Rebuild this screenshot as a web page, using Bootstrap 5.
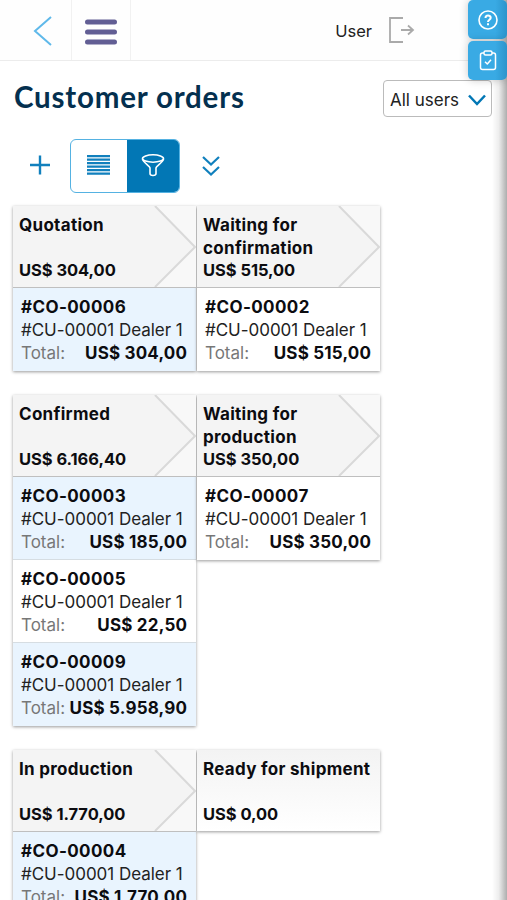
<!DOCTYPE html>
<html lang="en">
<head>
<meta charset="utf-8">
<meta name="viewport" content="width=device-width, initial-scale=1">
<title>Customer orders</title>
<link href="https://cdn.jsdelivr.net/npm/bootstrap@5.3.0/dist/css/bootstrap.min.css" rel="stylesheet">
<style>
html, body { height: 100%; }
body { font-family: Inter, "Liberation Sans", sans-serif; font-size: 17px; line-height: 23px; color: #0c0c10; background: #fff; overflow: hidden; }
svg { display: block; flex: none; }
.page-frame { height: 900px; overflow: hidden; }
.edge-shade { right: 0; top: 0; width: 15px; height: 900px; background: linear-gradient(to right, rgba(0,0,0,0), rgba(0,0,0,.07) 45%, rgba(0,0,0,.32)); }
.topbar { height: 61px; padding-top: 1px; border-bottom: 1px solid #ececec; background: #fefefe; }
.bar-cell { border-right: 1px solid #f1f1f1; margin-top: -1px; padding-top: 2px; }
.cell-back { width: 72px; padding-left: 32px; }
.cell-menu { width: 59px; padding-top: 3px; }
.user-name { font-size: 16.500px; margin-right: 16px; padding-top: 2px; color: #222; }
.user-zone { padding-right: 92px; }
.user-zone svg { margin-top: -2px; }
.help-tabs { right: 0; top: 0; width: 39px; gap: 2px; z-index: 5; }
.help-tab { height: 39px; background: linear-gradient(to right, #39aae4 70%, #2b94cb); border-radius: 5px; box-shadow: 0 0 8px rgba(0,0,0,.22); }
.title-row { padding: 18px 15px 0 14px; height: 77px; }
.page-title { font-family: Lato, sans-serif; font-weight: 700; font-size: 29.500px; line-height: 36px; letter-spacing: .8px; color: #04304f; }
.user-select { width: 109px; height: 37px; margin-top: 1px; border: 1px solid #bbb; border-radius: 4px; padding: 3px 5px 0 6px; color: #222; background: #fff; }
.tools { height: 54px; padding-left: 29px; margin-top: 1px; }
.tool-icon { margin-top: -2px; }
.view-switch { width: 110px; height: 54px; border: 1px solid #55b2e2; border-radius: 6px; overflow: hidden; margin-left: 20px; margin-right: 20px; }
.view-off { width: 56px; padding-right: 2px; }
.view-on { background: #0277b5; padding-right: 1px; }
.board { padding: 13px 0 0 13px; gap: 24px; }
.lane-pair { gap: 1px; }
.lane { width: 183px; box-shadow: 0 1px 3px rgba(0,0,0,.4); background: #fff; }
.lane-head { height: 82px; background: #f4f4f4; padding: 8px 6px 5px; border-bottom: 1px solid #bfbfbf; font-weight: 700; letter-spacing: .3px; }
.lane-head-last { height: 81px; padding-bottom: 4px; background: linear-gradient(#f3f3f3, #fff); border-bottom: 0; }
.lane-arrow { right: 0; top: 0; }
.lane-name { height: 45px; }
.money { font-size: 16.500px; letter-spacing: -.05px; }
.order { height: 83px; padding: 8px 9px 4px 8px; border-bottom: 1px solid #d6dde2; }
.order:last-child { border-bottom: 0; }
.order-tint { background: #e9f4fe; }
.order-total { font-weight: 700; letter-spacing: .2px; margin-right: -.2px; }
.code { letter-spacing: .4px; }
.cust { letter-spacing: -.03px; color: #222; }
.order-label { color: #777; }
</style>
</head>
<body>
<div class="page-frame position-relative">
  <header class="topbar d-flex align-items-stretch">
    <div class="bar-cell cell-back d-flex align-items-center">
      <svg width="20" height="32" viewBox="0 0 20 32" fill="none" stroke="#5fb9ea" stroke-width="2"><path d="M19 2 3 16 19 30"/></svg>
    </div>
    <div class="bar-cell cell-menu d-flex align-items-center justify-content-center">
      <svg width="32" height="26" viewBox="0 0 32 26" stroke="#625e94" stroke-width="5" stroke-linecap="round"><path d="M2.500 3H29.500M2.500 13H29.500M2.500 23H29.500"/></svg>
    </div>
    <div class="user-zone d-flex align-items-center ms-auto">
      <span class="user-name">User</span>
      <svg width="27" height="26" viewBox="0 0 27 26" fill="none" stroke="#aaa" stroke-width="1.800"><path d="M15 1H2V25H15M13 13H25M20 8.500 25 13 20 17.500"/></svg>
    </div>
  </header>

  <div class="title-row d-flex justify-content-between align-items-start">
    <h1 class="page-title mb-0">Customer orders</h1>
    <div class="user-select d-flex align-items-center justify-content-between">
      <span class="sel-text">All users</span>
      <svg width="18" height="12" viewBox="0 0 18 12" fill="none" stroke="#0277b5" stroke-width="2.500"><path d="M1 1.500 9 10 17 1.500"/></svg>
    </div>
  </div>

  <div class="tools d-flex align-items-center">
    <svg class="tool-icon" width="21" height="20" viewBox="0 0 21 20" stroke="#1180bd" stroke-width="2.400"><path d="M1 10H21M11 .5V19.500"/></svg>
    <div class="view-switch d-flex">
      <div class="view-off d-flex align-items-center justify-content-center">
        <svg class="tool-icon" width="23" height="20" viewBox="0 0 23 20" stroke="#1180bd" stroke-width="2.300"><path d="M0 1.200H23M0 4.700H23M0 8.200H23M0 11.700H23M0 15.200H23M0 18.700H23"/></svg>
      </div>
      <div class="view-on flex-fill d-flex align-items-center justify-content-center">
        <svg class="tool-icon" width="24" height="24" viewBox="0 0 24 24" fill="none" stroke="#fff" stroke-width="1.600"><ellipse cx="12" cy="5.500" rx="10.500" ry="3.700"/><path d="M1.500 6C1.700 9 9 13 9 15V20.500Q9 22.500 12 22.500T15 20.500V15C15 13 22.300 9 22.500 6"/></svg>
      </div>
    </div>
    <svg width="22" height="22" viewBox="0 0 22 22" fill="none" stroke="#1180bd" stroke-width="2.200"><path d="M3 2 11 9.500 19 2M3 12 11 19.500 19 12"/></svg>
  </div>

  <main class="board d-flex flex-column">
    <section class="lane-pair d-flex align-items-start">
      <div class="lane">
        <div class="lane-head position-relative d-flex flex-column">
          <svg class="lane-arrow position-absolute" width="42" height="81" viewBox="0 0 42 81"><path d="M1 0H42V81H1L41 41Z" fill="#f8f8f8"/><path d="M1 0 41 41 1 81" fill="none" stroke="#d9d9d9" stroke-width="2"/></svg>
          <span class="lane-name">Quotation</span><span class="money">US$ 304,00</span>
        </div>
        <div class="order order-tint"><div class="order-total code">#CO-00006</div><div class="cust">#CU-00001 Dealer 1</div><div class="d-flex justify-content-between"><span class="order-label">Total:</span><span class="order-total sum">US$ 304,00</span></div></div>
      </div>
      <div class="lane">
        <div class="lane-head position-relative d-flex flex-column">
          <svg class="lane-arrow position-absolute" width="42" height="81" viewBox="0 0 42 81"><path d="M1 0H42V81H1L41 41Z" fill="#f8f8f8"/><path d="M1 0 41 41 1 81" fill="none" stroke="#d9d9d9" stroke-width="2"/></svg>
          <span class="lane-name">Waiting for<br>confirmation</span><span class="money">US$ 515,00</span>
        </div>
        <div class="order"><div class="order-total code">#CO-00002</div><div class="cust">#CU-00001 Dealer 1</div><div class="d-flex justify-content-between"><span class="order-label">Total:</span><span class="order-total sum">US$ 515,00</span></div></div>
      </div>
    </section>

    <section class="lane-pair d-flex align-items-start">
      <div class="lane">
        <div class="lane-head position-relative d-flex flex-column">
          <svg class="lane-arrow position-absolute" width="42" height="81" viewBox="0 0 42 81"><path d="M1 0H42V81H1L41 41Z" fill="#f8f8f8"/><path d="M1 0 41 41 1 81" fill="none" stroke="#d9d9d9" stroke-width="2"/></svg>
          <span class="lane-name">Confirmed</span><span class="money">US$ 6.166,40</span>
        </div>
        <div class="order order-tint"><div class="order-total code">#CO-00003</div><div class="cust">#CU-00001 Dealer 1</div><div class="d-flex justify-content-between"><span class="order-label">Total:</span><span class="order-total sum">US$ 185,00</span></div></div>
        <div class="order"><div class="order-total code">#CO-00005</div><div class="cust">#CU-00001 Dealer 1</div><div class="d-flex justify-content-between"><span class="order-label">Total:</span><span class="order-total sum">US$ 22,50</span></div></div>
        <div class="order order-tint"><div class="order-total code">#CO-00009</div><div class="cust">#CU-00001 Dealer 1</div><div class="d-flex justify-content-between"><span class="order-label">Total:</span><span class="order-total sum">US$ 5.958,90</span></div></div>
      </div>
      <div class="lane">
        <div class="lane-head position-relative d-flex flex-column">
          <svg class="lane-arrow position-absolute" width="42" height="81" viewBox="0 0 42 81"><path d="M1 0H42V81H1L41 41Z" fill="#f8f8f8"/><path d="M1 0 41 41 1 81" fill="none" stroke="#d9d9d9" stroke-width="2"/></svg>
          <span class="lane-name">Waiting for<br>production</span><span class="money">US$ 350,00</span>
        </div>
        <div class="order"><div class="order-total code">#CO-00007</div><div class="cust">#CU-00001 Dealer 1</div><div class="d-flex justify-content-between"><span class="order-label">Total:</span><span class="order-total sum">US$ 350,00</span></div></div>
      </div>
    </section>

    <section class="lane-pair d-flex align-items-start">
      <div class="lane">
        <div class="lane-head position-relative d-flex flex-column">
          <svg class="lane-arrow position-absolute" width="42" height="81" viewBox="0 0 42 81"><path d="M1 0H42V81H1L41 41Z" fill="#f8f8f8"/><path d="M1 0 41 41 1 81" fill="none" stroke="#d9d9d9" stroke-width="2"/></svg>
          <span class="lane-name">In production</span><span class="money">US$ 1.770,00</span>
        </div>
        <div class="order order-tint"><div class="order-total code">#CO-00004</div><div class="cust">#CU-00001 Dealer 1</div><div class="d-flex justify-content-between"><span class="order-label">Total:</span><span class="order-total sum">US$ 1.770,00</span></div></div>
      </div>
      <div class="lane">
        <div class="lane-head lane-head-last d-flex flex-column">
          <span class="lane-name">Ready for shipment</span><span class="money">US$ 0,00</span>
        </div>
      </div>
    </section>
  </main>

  <div class="edge-shade position-absolute"></div>
  <aside class="help-tabs position-absolute d-flex flex-column">
    <div class="help-tab d-flex align-items-center justify-content-center">
      <svg width="20" height="20" viewBox="0 0 20 20" fill="none" stroke="#fff" stroke-width="1.600"><circle cx="10" cy="10" r="9"/><path d="M7.500 8C7.500 4.700 12.700 4.800 12.700 7.800 12.700 9.800 10 9.700 10 12M10 13.300V15.200" stroke-width="2"/></svg>
    </div>
    <div class="help-tab d-flex align-items-center justify-content-center">
      <svg width="18" height="21" viewBox="0 0 18 21" fill="none" stroke="#fff" stroke-width="1.500" stroke-linejoin="round"><path d="M5 3H3.500Q1.500 3 1.500 5V17.500Q1.500 19.500 3.500 19.500H14.500Q16.500 19.500 16.500 17.500V5Q16.500 3 14.500 3H13"/><rect x="5" y="1" width="8" height="4" rx="1.500"/><path d="M6 11.800 8.300 14 12 9.800"/></svg>
    </div>
  </aside>
</div>
<script src="https://cdn.jsdelivr.net/npm/bootstrap@5.3.0/dist/js/bootstrap.bundle.min.js"></script>
</body>
</html>
